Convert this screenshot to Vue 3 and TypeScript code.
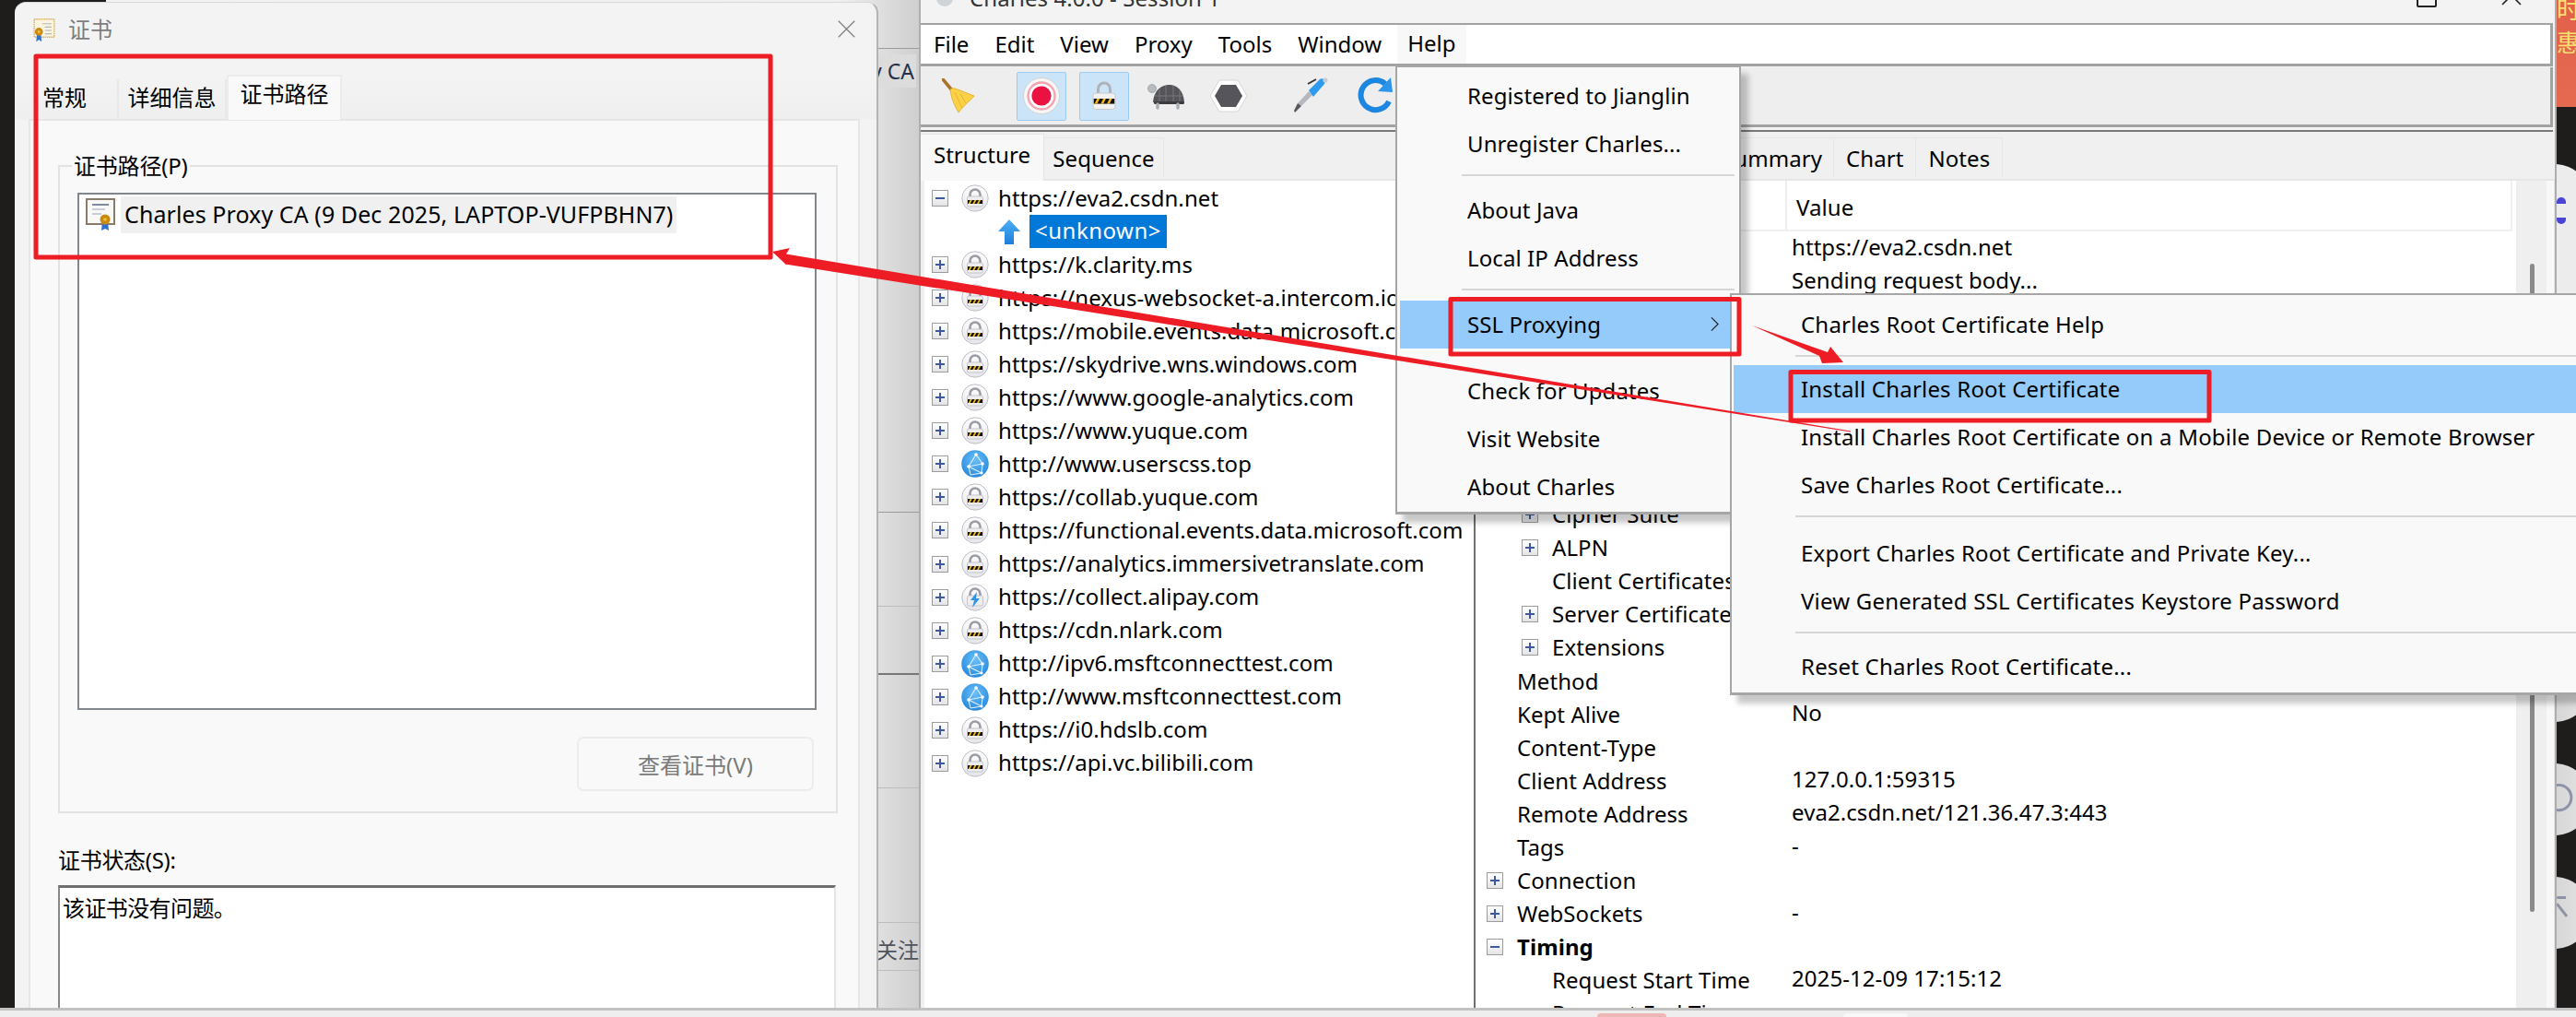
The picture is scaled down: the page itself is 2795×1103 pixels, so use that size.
<script setup lang="ts">
interface TreeRow { url: string; icon: 'lock' | 'globe' | 'bolt' }
interface DetailRow { label?: string; value?: string; level?: 1 | 2; exp?: 'plus' | 'minus'; bold?: boolean }

const treeTop: TreeRow[] = [
  { url: 'https://k.clarity.ms', icon: 'lock' },
  { url: 'https://nexus-websocket-a.intercom.io', icon: 'lock' },
  { url: 'https://mobile.events.data.microsoft.com', icon: 'lock' },
  { url: 'https://skydrive.wns.windows.com', icon: 'lock' },
  { url: 'https://www.google-analytics.com', icon: 'lock' },
  { url: 'https://www.yuque.com', icon: 'lock' },
  { url: 'http://www.userscss.top', icon: 'globe' },
  { url: 'https://collab.yuque.com', icon: 'lock' },
  { url: 'https://functional.events.data.microsoft.com', icon: 'lock' },
  { url: 'https://analytics.immersivetranslate.com', icon: 'lock' },
  { url: 'https://collect.alipay.com', icon: 'bolt' },
  { url: 'https://cdn.nlark.com', icon: 'lock' },
  { url: 'http://ipv6.msftconnecttest.com', icon: 'globe' },
  { url: 'http://www.msftconnecttest.com', icon: 'globe' },
  { url: 'https://i0.hdslb.com', icon: 'lock' },
  { url: 'https://api.vc.bilibili.com', icon: 'lock' },
]

const details: DetailRow[] = [
  { value: 'https://eva2.csdn.net' },
  { value: 'Sending request body...' },
  {}, {}, {}, {}, {}, {},
  { label: 'Cipher Suite', level: 2, exp: 'plus' },
  { label: 'ALPN', level: 2, exp: 'plus' },
  { label: 'Client Certificates', level: 2 },
  { label: 'Server Certificates', level: 2, exp: 'plus' },
  { label: 'Extensions', level: 2, exp: 'plus' },
  { label: 'Method', level: 1 },
  { label: 'Kept Alive', level: 1, value: 'No' },
  { label: 'Content-Type', level: 1 },
  { label: 'Client Address', level: 1, value: '127.0.0.1:59315' },
  { label: 'Remote Address', level: 1, value: 'eva2.csdn.net/121.36.47.3:443' },
  { label: 'Tags', level: 1, value: '-' },
  { label: 'Connection', level: 1, exp: 'plus' },
  { label: 'WebSockets', level: 1, exp: 'plus', value: '-' },
  { label: 'Timing', level: 1, exp: 'minus', bold: true },
  { label: 'Request Start Time', level: 2, value: '2025-12-09 17:15:12' },
  { label: 'Request End Time', level: 2 },
]

const menus = ['File', 'Edit', 'View', 'Proxy', 'Tools', 'Window']
const bands = [
  { h: 53, cls: 'line-dark' }, { h: 503, cls: 'line-dark' }, { h: 102, cls: 'line-light' },
  { h: 74, cls: 'line-strong' }, { h: 123, cls: 'line-light' }, { h: 146, cls: 'line-light' },
  { h: 52, cls: 'line-light' }, { h: 40, cls: '' },
]
</script>

<template>
  <div class="desktop">
    <svg class="sprite" aria-hidden="true">
      <defs>
        <linearGradient id="gBlue" x1="0" y1="0" x2="0" y2="1"><stop offset="0" stop-color="#4fb0f5" /><stop offset="1" stop-color="#1b7fdc" /></linearGradient>
        <radialGradient id="gGlobe" cx="0.5" cy="0.35" r="0.75"><stop offset="0" stop-color="#6cc0f8" /><stop offset="1" stop-color="#1d7fd8" /></radialGradient>
        <linearGradient id="gDisc" x1="0" y1="0" x2="0" y2="1"><stop offset="0" stop-color="#ffffff" /><stop offset="1" stop-color="#e6e6ea" /></linearGradient>
        <symbol id="hazard" viewBox="0 0 24 6">
          <rect width="24" height="6" fill="#111" />
          <path d="M1 6 4 0h3L4 6zM8 6l3-6h3l-3 6zM15 6l3-6h3l-3 6z" fill="#f0b818" />
        </symbol>
        <symbol id="i-lock" viewBox="0 0 30 30">
          <circle cx="15" cy="15" r="14.2" fill="url(#gDisc)" stroke="#bcbec8" />
          <path d="M9.5 14V11a5.5 5.5 0 0 1 11 0V14" fill="none" stroke="#9a9ca6" stroke-width="2.6" />
          <rect x="6.5" y="13" width="17" height="11" rx="1.8" fill="#eeeef0" stroke="#b4b4ba" stroke-width=".7" />
          <use href="#hazard" x="7" y="17" width="16" height="4" />
        </symbol>
        <symbol id="i-bolt" viewBox="0 0 30 30">
          <circle cx="15" cy="15" r="14.2" fill="url(#gDisc)" stroke="#bcbec8" />
          <path d="M9.5 14V11a5.5 5.5 0 0 1 11 0V14" fill="none" stroke="#9a9ca6" stroke-width="2.6" />
          <rect x="6.5" y="13" width="17" height="11" rx="1.8" fill="#eeeef0" stroke="#b4b4ba" stroke-width=".7" />
          <path d="M17 9 10 18h4l-2 8 8-10h-4z" fill="#2d95ea" />
        </symbol>
        <symbol id="i-globe" viewBox="0 0 30 30">
          <circle cx="15" cy="15" r="14.8" fill="url(#gGlobe)" />
          <path d="M16 5 8 18l15-3zM16 5l7 10-1 10M8 18l14 7-12 2M8 18l2 9" fill="none" stroke="#dff0fd" stroke-width="1.1" />
          <circle cx="16" cy="5" r="1.8" fill="#fff" /><circle cx="8" cy="18" r="1.8" fill="#fff" /><circle cx="23" cy="15" r="1.8" fill="#fff" /><circle cx="22" cy="25" r="1.5" fill="#fff" />
        </symbol>
        <symbol id="i-cert" viewBox="0 0 32 36">
          <rect x="1" y="1" width="30" height="27" fill="#fbf4de" stroke="#d9b36c" stroke-width="2" stroke-dasharray="2 1" />
          <path d="M13 8h14M17 13h10M17 18h10M17 23h10" stroke="#aeb6c2" stroke-width="1.6" />
          <path d="M5 24l-1 11 4-3 4 3-1-11z" fill="#2f6fd0" />
          <circle cx="8" cy="20" r="6" fill="#c98a10" /><circle cx="8" cy="20" r="2" fill="#f0c040" />
        </symbol>
        <symbol id="i-cert2" viewBox="0 0 32 36">
          <rect x="1" y="1" width="30" height="27" fill="#f8f8f6" stroke="#8a7c68" stroke-width="2" />
          <path d="M7 7h18" stroke="#7e8aa0" stroke-width="2" /><path d="M7 12h14M7 17h10" stroke="#b8c0cc" stroke-width="1.6" />
          <path d="M18 26l-1 9 4-2 4 2-1-9z" fill="#2f6fd0" />
          <circle cx="21" cy="23" r="5.5" fill="#c98a10" /><circle cx="21" cy="23" r="1.8" fill="#f0c040" />
        </symbol>
      </defs>
    </svg>

    <div class="backdrop">
      <div v-for="(b, i) in bands" :key="i" class="band" :class="b.cls" :style="{ height: b.h + 'px' }"></div>
      <span class="back-text ca">y CA</span>
      <span class="back-text follow">关注</span>
    </div>

    <div class="wallpaper">
      <div class="promo"><span>时</span><span>惠</span></div>
      <div class="disc disc-a"><i class="tri tri-up"></i><i class="tri tri-down"></i></div>
      <div class="disc disc-b"></div>
      <div class="disc disc-c"><svg class="disc-icon" viewBox="0 0 23 80"><circle cx="2" cy="38" r="14" fill="none" stroke="#8e92a6" stroke-width="3" /></svg></div>
      <div class="disc disc-d"><svg class="disc-icon" viewBox="0 0 23 80"><path d="M0 23h10M0 30l11 14" fill="none" stroke="#8e92a6" stroke-width="3" /></svg></div>
    </div>

    <section class="dialog">
      <header class="dlg-title">
        <svg class="dlg-icon"><use href="#i-cert" /></svg>
        <span class="dlg-name">证书</span>
        <svg class="dlg-close" viewBox="0 0 24 24"><path d="M2 2l20 20M22 2 2 22" stroke="#808080" stroke-width="1.5" fill="none" /></svg>
      </header>
      <nav class="dlg-tabs">
        <span class="dlg-tab first">常规</span>
        <span class="dlg-tab">详细信息</span>
        <span class="dlg-tab on">证书路径</span>
      </nav>
      <div class="dlg-panel">
        <div class="group">
          <span class="legend">证书路径(P)</span>
          <div class="path-list">
            <div class="path-row">
              <svg class="path-icon"><use href="#i-cert2" /></svg>
              <span class="path-text">Charles Proxy CA (9 Dec 2025, LAPTOP-VUFPBHN7)</span>
            </div>
          </div>
          <div class="view-row"><button class="view-btn" type="button">查看证书(V)</button></div>
        </div>
        <div class="status-label">证书状态(S):</div>
        <div class="status-box">该证书没有问题。</div>
      </div>
    </section>

    <section class="charles">
      <header class="ch-title">
        <svg class="ch-logo" viewBox="0 0 20 20"><circle cx="10" cy="10" r="9" fill="#cfd4d8" /><circle cx="10" cy="8" r="4" fill="#7fa4c0" /></svg>
        <span class="ch-name">Charles 4.0.0 - Session 1</span>
        <span class="ch-max"></span>
        <svg class="ch-x" viewBox="0 0 22 22"><path d="M1 1l20 20M21 1 1 21" stroke="#222" stroke-width="1.6" /></svg>
      </header>

      <nav class="menubar">
        <span v-for="m in menus" :key="m" class="menu-name">{{ m }}</span>
        <span class="menu-name help">Help</span>
      </nav>

      <div class="toolbar">
        <svg class="tb broom" viewBox="0 0 36 38">
          <path d="M1 1 11 13" stroke="#a8742c" stroke-width="3.6" stroke-linecap="round" />
          <path d="M9 12 C 13 9, 16 12, 35 19 C 31 24, 25 28, 18 37 C 14 30, 10 22, 9 12Z" fill="#fbd247" stroke="#e0a820" stroke-width=".8" />
          <path d="M14 15 22 32M20 17 26 27" stroke="#e6b02a" stroke-width=".9" />
        </svg>
        <span class="tb-btn rec">
          <svg viewBox="0 0 44 44" class="tb-in">
            <circle cx="22" cy="22" r="19.5" fill="#f7f7f7" stroke="#d2d2d2" />
            <circle cx="22" cy="22" r="14.5" fill="#fff" stroke="#f4a3b0" stroke-width="2.4" />
            <circle cx="22" cy="22" r="10.6" fill="#ea1240" />
          </svg>
        </span>
        <span class="tb-btn lock">
          <svg viewBox="0 0 26 32" class="tb-in">
            <path d="M6.5 15V8.5a6.5 6.5 0 0 1 13 0V15" fill="none" stroke="#b0b2ba" stroke-width="3" />
            <rect x="1" y="13" width="24" height="17.5" rx="2.6" fill="#f2f2f2" stroke="#c8c8cc" />
            <use href="#hazard" x="1.5" y="19" width="23" height="5.8" />
          </svg>
        </span>
        <svg class="tb turtle" viewBox="0 0 40 30">
          <circle cx="5" cy="7" r="4.5" fill="#b8bcc0" stroke="#8a8e92" stroke-width=".6" />
          <path d="M6 22C7 8 16 3 24 3s15 6 16 19z" fill="#555559" />
          <path d="M13 8v13M20 4v17M28 4v17M35 9v12M8 15h30" stroke="#76767c" stroke-width="1" />
          <rect x="7" y="21" width="33" height="3" rx="1.5" fill="#3c3c40" />
          <path d="M11 24v4M33 24v4" stroke="#a9adb1" stroke-width="3.4" stroke-linecap="round" />
        </svg>
        <svg class="tb hex" viewBox="0 0 40 36">
          <path d="M10 1h20l10 17-10 17H10L0 18z" fill="#fff" stroke="#d6d6d8" />
          <path d="M12 6h16l7 12-7 12H12L5 18z" fill="#55555b" />
        </svg>
        <svg class="tb pen" viewBox="0 0 40 40">
          <path d="M22 19 10 31l-4-3 12-13z" fill="#b5b9bf" />
          <path d="M6 28 2 36l1 2 7-7z" fill="#55585c" />
          <path d="M18 14 30 2c3-2 7 1 5 5L23 21z" fill="#2e9bf0" />
          <path d="M17 7l9-5" stroke="#333" stroke-width="2" />
          <circle cx="36" cy="3" r="2.6" fill="#c8ccd0" />
        </svg>
        <svg class="tb refresh" viewBox="0 0 42 40">
          <path d="M32 7A16 16 0 1 0 36 26" fill="none" stroke="#1d86e0" stroke-width="6" />
          <path d="M24 15 40 16 38 0z" fill="#2a95ea" />
        </svg>
      </div>

      <div class="rule"></div>

      <div class="split">
        <div class="left-pane">
          <div class="tabs">
            <span class="tab on">Structure</span>
            <span class="tab seq">Sequence</span>
          </div>
          <div class="tree">
            <div class="row">
              <span class="exp minus"></span>
              <svg class="node"><use href="#i-lock" /></svg>
              <span class="url">https://eva2.csdn.net</span>
            </div>
            <div class="row child">
              <svg class="up" viewBox="0 0 24 27"><path d="M12 0 24 13h-7v14H7V13H0z" fill="url(#gBlue)" /></svg>
              <span class="url picked">&lt;unknown&gt;</span>
            </div>
            <div v-for="r in treeTop" :key="r.url" class="row">
              <span class="exp plus"></span>
              <svg class="node"><use :href="'#i-' + r.icon" /></svg>
              <span class="url">{{ r.url }}</span>
            </div>
          </div>
        </div>

        <div class="divider"></div>

        <div class="right-pane">
          <div class="tabs right-tabs">
            <span class="tab r summary">Summary</span>
            <span class="tab r">Chart</span>
            <span class="tab r">Notes</span>
          </div>
          <div class="table-wrap">
            <div class="table">
              <div class="thead"><span class="th-name"></span><span class="th-value">Value</span></div>
              <div class="tbody">
                <div v-for="(d, i) in details" :key="i" class="drow">
                  <div class="dlabel" :class="d.level === 2 ? 'lvl2' : 'lvl1'">
                    <span v-if="d.exp" class="exp" :class="d.exp"></span>
                    <span v-else class="exp-slot"></span>
                    <span :class="{ bold: d.bold }">{{ d.label }}</span>
                  </div>
                  <div class="dvalue">{{ d.value }}</div>
                </div>
              </div>
            </div>
            <div class="gutter"><div class="thumb"></div></div>
            <div class="edge"></div>
          </div>
        </div>
      </div>
    </section>

    <div class="popup help-menu">
      <div class="item">Registered to Jianglin</div>
      <div class="item">Unregister Charles...</div>
      <div class="sep s20"></div>
      <div class="item">About Java</div>
      <div class="item">Local IP Address</div>
      <div class="sep s20"></div>
      <div class="item active">SSL Proxying<svg class="chev" viewBox="0 0 10 18"><path d="M1 1l8 8-8 8" fill="none" stroke="#222" stroke-width="1.3" /></svg></div>
      <div class="sep s20 blank"></div>
      <div class="item">Check for Updates</div>
      <div class="item">Visit Website</div>
      <div class="item">About Charles</div>
    </div>

    <div class="popup sub-menu">
      <div class="item">Charles Root Certificate Help</div>
      <div class="sep s18"></div>
      <div class="item active">Install Charles Root Certificate</div>
      <div class="item">Install Charles Root Certificate on a Mobile Device or Remote Browser</div>
      <div class="item">Save Charles Root Certificate...</div>
      <div class="sep s22"></div>
      <div class="item">Export Charles Root Certificate and Private Key...</div>
      <div class="item">View Generated SSL Certificates Keystore Password</div>
      <div class="sep s19"></div>
      <div class="item">Reset Charles Root Certificate...</div>
    </div>

    <svg class="marks" viewBox="0 0 2795 1103">
      <g fill="none" stroke="#ee1c25" stroke-width="5" stroke-linejoin="round">
        <rect x="39" y="61" width="797" height="218" />
        <rect x="1574" y="324.5" width="313" height="59.5" />
        <rect x="1943" y="403.5" width="454" height="52.5" />
      </g>
      <path d="M838 273 857 269 853 275.5 2008 467.5 2008 468.5 852 286.5 855 289Z" fill="#ee1c25" />
      <path d="M1901 353 1983 382 1986 376 2000 393 1977 394 1974 386Z" fill="#ee1c25" />
    </svg>

    <footer class="taskbar"><i class="pill pink"></i><i class="pill white"></i></footer>
  </div>
</template>

<style scoped>
.desktop {
  position: relative;
  width: 2795px;
  height: 1103px;
  overflow: hidden;
  background: #1f1c1c;
  font-family: "Noto Sans", "Noto Sans CJK SC", sans-serif;
  color: #000;
}
.sprite { position: absolute; width: 0; height: 0; }

/* what is visible of the browser window behind the two dialogs */
.backdrop {
  position: absolute;
  left: 115px;
  top: 0;
  width: 882px;
  height: 1093px;
  display: flex;
  flex-direction: column;
  background: linear-gradient(to right, #f2f2f2 0, #f0f0f0 90%, #cfcfcf 100%);
}
.band { flex: none; box-sizing: border-box; }
.line-dark { border-bottom: 1px solid #9a9a9a; }
.line-light { border-bottom: 1px solid #bdbdbd; }
.line-strong { border-bottom: 2px solid #777; }
.back-text { position: absolute; font-size: 20px; color: #444a55; white-space: nowrap; }
.ca { right: 3px; top: 59px; font-size: 23px; background: #dcdcdc; padding: 2px 2px 2px 12px; color: #23304a; }
.follow { right: 0; top: 1012px; font-size: 23px; color: #50525c; }

.wallpaper {
  position: absolute;
  left: 2772px;
  top: 0;
  width: 23px;
  height: 1093px;
  overflow: hidden;
  border-left: 2px solid #adadad;
  box-sizing: border-box;
}
.promo {
  height: 116px;
  background: linear-gradient(#e2604a, #e46a50);
  color: #f7e070;
  font-size: 26px;
  line-height: 36px;
  display: flex;
  flex-direction: column;
}
.promo span:first-child { margin-top: -8px; }
.disc {
  position: absolute;
  left: -41px;
  width: 78px;
  height: 78px;
  border-radius: 50%;
  background: linear-gradient(to right, #c8c8c8, #e4e4e4);
}
.disc-a { top: 178px; height: 150px; border-radius: 39px; background: #ececec; }
.disc-b { top: 705px; }
.disc-c { top: 828px; }
.disc-d { top: 951px; }
.disc-icon { position: absolute; left: 41px; top: 0; width: 23px; height: 78px; }
.tri { position: absolute; left: 41px; width: 10px; height: 7px; background: #4a45d8; }
.tri-up { top: 36px; border-radius: 8px 8px 0 0; }
.tri-down { top: 58px; border-radius: 0 0 8px 8px; }

/* certificate dialog */
.dialog {
  position: absolute;
  left: 16px;
  top: 2px;
  width: 937px;
  height: 1091px;
  box-sizing: border-box;
  background: #f3f3f3;
  border-right: 2px solid #b4b4b4;
  border-top: 1px solid #d8d8d8;
  border-radius: 12px 12px 0 0;
  display: flex;
  flex-direction: column;
  font-size: 24px;
  overflow: hidden;
}
.dlg-title {
  height: 78px;
  flex: none;
  display: flex;
  align-items: flex-start;
  padding: 15px 22px 0 17px;
  box-sizing: border-box;
}
.dlg-icon { width: 30px; height: 26px; margin-top: 2px; }
.dlg-name { color: #7d7d7d; margin-left: 11px; line-height: 28px; }
.dlg-close { width: 21px; height: 21px; margin-left: auto; margin-top: 3px; }
.dlg-tabs {
  height: 48px;
  flex: none;
  display: flex;
  align-items: flex-end;
  padding-left: 15px;
  background: linear-gradient(#f3f3f3, #efefef);
}
.dlg-tab {
  height: 43px;
  box-sizing: border-box;
  display: flex;
  align-items: center;
  justify-content: center;
  border-right: 2px solid #e8e8e8;
  width: 117px;
  line-height: 1;
  padding-bottom: 3px;
}
.dlg-tab.first { width: 98px; padding-right: 18px; }
.dlg-tab.on {
  height: 49px;
  width: 125px;
  background: #f9f9f9;
  border: 2px solid #ececec;
  border-bottom: 0;
  margin-bottom: -1px;
  padding-bottom: 9px;
  z-index: 1;
}
.dlg-panel {
  flex: 1;
  margin: 0 18px 0 15px;
  background: #f9f9f9;
  border: 2px solid #e6e6e6;
  border-bottom: 0;
  padding: 48px 22px 0 30px;
}
.group {
  position: relative;
  width: 846px;
  box-sizing: border-box;
  border: 2px solid #e2e2e2;
  padding: 28px 21px 22px 19px;
}
.legend {
  position: absolute;
  left: 13px;
  top: -18px;
  line-height: 34px;
  padding: 0 2px;
  background: #f9f9f9;
  letter-spacing: -0.2px;
}
.path-list {
  height: 561px;
  box-sizing: border-box;
  background: #fff;
  border: 2px solid #82878e;
  padding: 2px 0 0 7px;
}
.path-row { display: flex; align-items: center; height: 40px; }
.path-icon { width: 32px; height: 36px; margin-right: 6px; }
.path-text {
  background: #f0f0f0;
  height: 40px;
  line-height: 38px;
  padding: 0 4px;
  font-size: 25px;
  letter-spacing: 0.08px;
  white-space: nowrap;
}
.view-row { display: flex; justify-content: flex-end; margin-top: 29px; padding-right: 3px; }
.view-btn {
  width: 257px;
  height: 59px;
  font: inherit;
  color: #7a7a7a;
  background: #f9f9f9;
  border: 2px solid #ececec;
  border-radius: 7px;
}
.status-label { margin-top: 37px; line-height: 28px; letter-spacing: -0.3px; }
.status-box {
  margin-top: 13px;
  height: 200px;
  width: 844px;
  box-sizing: border-box;
  background: #fff;
  border-top: 3px solid #6f6f6f;
  border-left: 2px solid #888;
  border-right: 2px solid #e4e4e4;
  padding: 7px 0 0 3px;
  line-height: 30px;
  letter-spacing: -0.6px;
}

/* charles main window */
.charles {
  position: absolute;
  left: 997px;
  top: -30px;
  width: 1775px;
  height: 1123px;
  box-sizing: border-box;
  border-left: 2px solid #aeaeae;
  background: #f3f3f3;
  display: flex;
  flex-direction: column;
  overflow: hidden;
  font-size: 24px;
  letter-spacing: 0.07px;
}
.ch-title {
  height: 55px;
  flex: none;
  display: flex;
  align-items: center;
  position: relative;
  padding-left: 16px;
  color: #333;
}
.ch-logo { width: 20px; height: 20px; }
.ch-name { margin-left: 17px; white-space: nowrap; }
.ch-max {
  position: absolute;
  left: 1623px;
  top: 20px;
  width: 18px;
  height: 14px;
  border: 2px solid #222;
  border-radius: 2px;
}
.ch-x { position: absolute; left: 1715px; top: 14px; width: 22px; height: 22px; }
.menubar {
  height: 47px;
  flex: none;
  box-sizing: border-box;
  background: #fff;
  border: 2px solid #a2a2a2;
  border-width: 2px 3px 3px 0;
  margin-right: 2px;
  display: flex;
  padding-left: 14px;
  align-items: center;
  gap: 28px;
  letter-spacing: 0;
}
.menu-name { line-height: 40px; }
.menu-name.help {
  background: #f8f8f8;
  padding: 0 11px;
  margin-left: -11px;
  height: 42px;
}
.toolbar {
  height: 65px;
  flex: none;
  box-sizing: border-box;
  background: #eeeeee;
  border: 2px solid #a2a2a2;
  border-width: 0 3px 3px 0;
  margin: 1px 2px 0 0;
  display: flex;
  align-items: center;
  padding-left: 23px;
}
.tb { flex: none; }
.broom { width: 36px; height: 38px; }
.tb-btn {
  flex: none;
  width: 54px;
  height: 53px;
  box-sizing: border-box;
  background: #cce4f7;
  border: 1px solid #99ccf4;
  border-radius: 2px;
  display: flex;
  align-items: center;
  justify-content: center;
}
.tb-in { width: 44px; height: 44px; }
.rec { margin-left: 45px; }
.lock { margin-left: 14px; }
.lock .tb-in { width: 26px; height: 32px; }
.turtle { width: 40px; height: 30px; margin-left: 20px; }
.hex { width: 40px; height: 36px; margin-left: 28px; }
.pen { width: 40px; height: 40px; margin-left: 49px; }
.refresh { width: 42px; height: 40px; margin-left: 29px; }
.rule { flex: none; height: 2px; margin: 3px 2px 0 0; background: #787878; }
.split { flex: 1; display: flex; min-height: 0; background: #f0f0f0; }
.left-pane { width: 600px; flex: none; display: flex; flex-direction: column; }
.divider { width: 2px; flex: none; background: #6e6e6e; }
.right-pane { flex: 1; min-width: 0; display: flex; flex-direction: column; background: #f5f5f5; }
.tabs {
  height: 53px;
  flex: none;
  box-sizing: border-box;
  display: flex;
  align-items: flex-end;
  padding-bottom: 2px;
  background: #f0f0f0;
  border-bottom: 2px solid #e6e6e6;
}
.tab {
  box-sizing: border-box;
  height: 43px;
  display: flex;
  align-items: center;
  justify-content: center;
  border: 1px solid #e6e6e6;
  border-bottom: 0;
  border-left: 0;
  padding: 0 13px;
  white-space: nowrap;
}
.tab.on {
  height: 51px;
  width: 134px;
  margin-bottom: -4px;
  padding-bottom: 8px;
  background: #f8f8f8;
  z-index: 1;
}
.tab.seq { width: 130px; }
.right-tabs { padding-left: 259px; }
.tab.r.summary { width: 130px; justify-content: flex-end; padding-right: 12px; }
.tree { flex: 1; margin-left: 4px; background: #fff; padding-top: 1px; overflow: hidden; }
.row { height: 36.05px; display: flex; align-items: center; white-space: nowrap; padding-left: 8px; }
.row.child { padding-left: 80px; }
.exp, .exp-slot { flex: none; width: 18px; height: 18px; box-sizing: border-box; }
.exp {
  position: relative;
  border: 1px solid #9c9c9c;
  background: linear-gradient(#fff, #e4e4e8);
}
.exp::before {
  content: "";
  position: absolute;
  left: 3px;
  right: 3px;
  top: 7px;
  height: 2px;
  background: #3d5a9e;
}
.exp.plus::after {
  content: "";
  position: absolute;
  top: 3px;
  bottom: 3px;
  left: 7px;
  width: 2px;
  background: #3d5a9e;
}
.node { width: 30px; height: 30px; margin-left: 14px; flex: none; }
.url { margin: -2px 0 0 10px; line-height: 33px; }
.up { width: 24px; height: 27px; flex: none; }
.picked {
  margin: 0 0 0 10px;
  background: #0078d7;
  color: #fff;
  height: 36px;
  line-height: 34px;
  padding: 0 6px;
  letter-spacing: 0.5px;
}
.table-wrap { flex: 1; display: flex; min-height: 0; }
.table { width: 1129px; flex: none; background: #fff; overflow: hidden; display: flex; flex-direction: column; }
.thead {
  height: 55px;
  flex: none;
  box-sizing: border-box;
  display: flex;
  margin-right: 4px;
  border-bottom: 2px solid #f0f0f0;
  border-right: 2px solid #f0f0f0;
}
.th-name { width: 336px; flex: none; border-right: 2px solid #eeeeee; }
.th-value { padding-left: 10px; line-height: 58px; }
.tbody { flex: 1; overflow: hidden; }
.drow { height: 36.09px; display: flex; align-items: center; white-space: nowrap; }
.dlabel { width: 343px; flex: none; box-sizing: border-box; display: flex; align-items: center; overflow: hidden; }
.lvl1 { padding-left: 12px; }
.lvl2 { padding-left: 50px; }
.dlabel .exp, .dlabel .exp-slot { margin-right: 15px; }
.bold { font-weight: 700; }
.dvalue { margin-top: -4px; }
.gutter { width: 33px; flex: none; background: #efefef; padding-left: 15px; box-sizing: border-box; }
.thumb { width: 5px; height: 703px; margin-top: 90px; background: #8a8a8a; border-radius: 3px; }
.edge { flex: 1; background: #f8f8f8; border-right: 1px solid #e6e6e6; }

/* menus */
.popup {
  position: absolute;
  box-sizing: border-box;
  background: #f9f9f9;
  border: 2px solid #a6a6a6;
  border-bottom-width: 3px;
  box-shadow: 8px 9px 6px rgba(0, 0, 0, 0.22);
  font-size: 24px;
  white-space: nowrap;
  letter-spacing: 0.2px;
}
.help-menu { left: 1514px; top: 71px; width: 375px; height: 487px; padding: 5px 0 0 3px; letter-spacing: 0.1px; }
.sub-menu { left: 1877px; top: 318px; width: 960px; height: 436px; padding: 6px 0 0 2px; }
.item { height: 52px; line-height: 52px; padding-left: 73px; position: relative; }
.item.active { background: #94cbfa; }
.help-menu .item.active { margin-right: 9px; }
.chev { position: absolute; left: 337px; top: 17px; width: 9px; height: 17px; }
.sep { position: relative; }
.sep::after {
  content: "";
  position: absolute;
  left: 67px;
  right: 5px;
  top: 7px;
  height: 1.5px;
  background: #d6d6d6;
}
.sep.blank::after { display: none; }
.s18 { height: 18px; }
.s19 { height: 19px; }
.s20 { height: 20px; }
.s22 { height: 22px; }

.marks { position: absolute; left: 0; top: 0; width: 2795px; height: 1103px; pointer-events: none; }

.taskbar {
  position: absolute;
  left: 0;
  right: 0;
  bottom: 0;
  height: 10px;
  box-sizing: border-box;
  background: #eeeeee;
  border-top: 3px solid #c2c2c2;
}
.pill { position: absolute; bottom: 0; height: 4px; border-radius: 8px 8px 0 0; }
.pink { left: 1733px; width: 75px; background: #efb6b6; }
.white { left: 2000px; width: 70px; background: #f8f8f8; }
</style>
